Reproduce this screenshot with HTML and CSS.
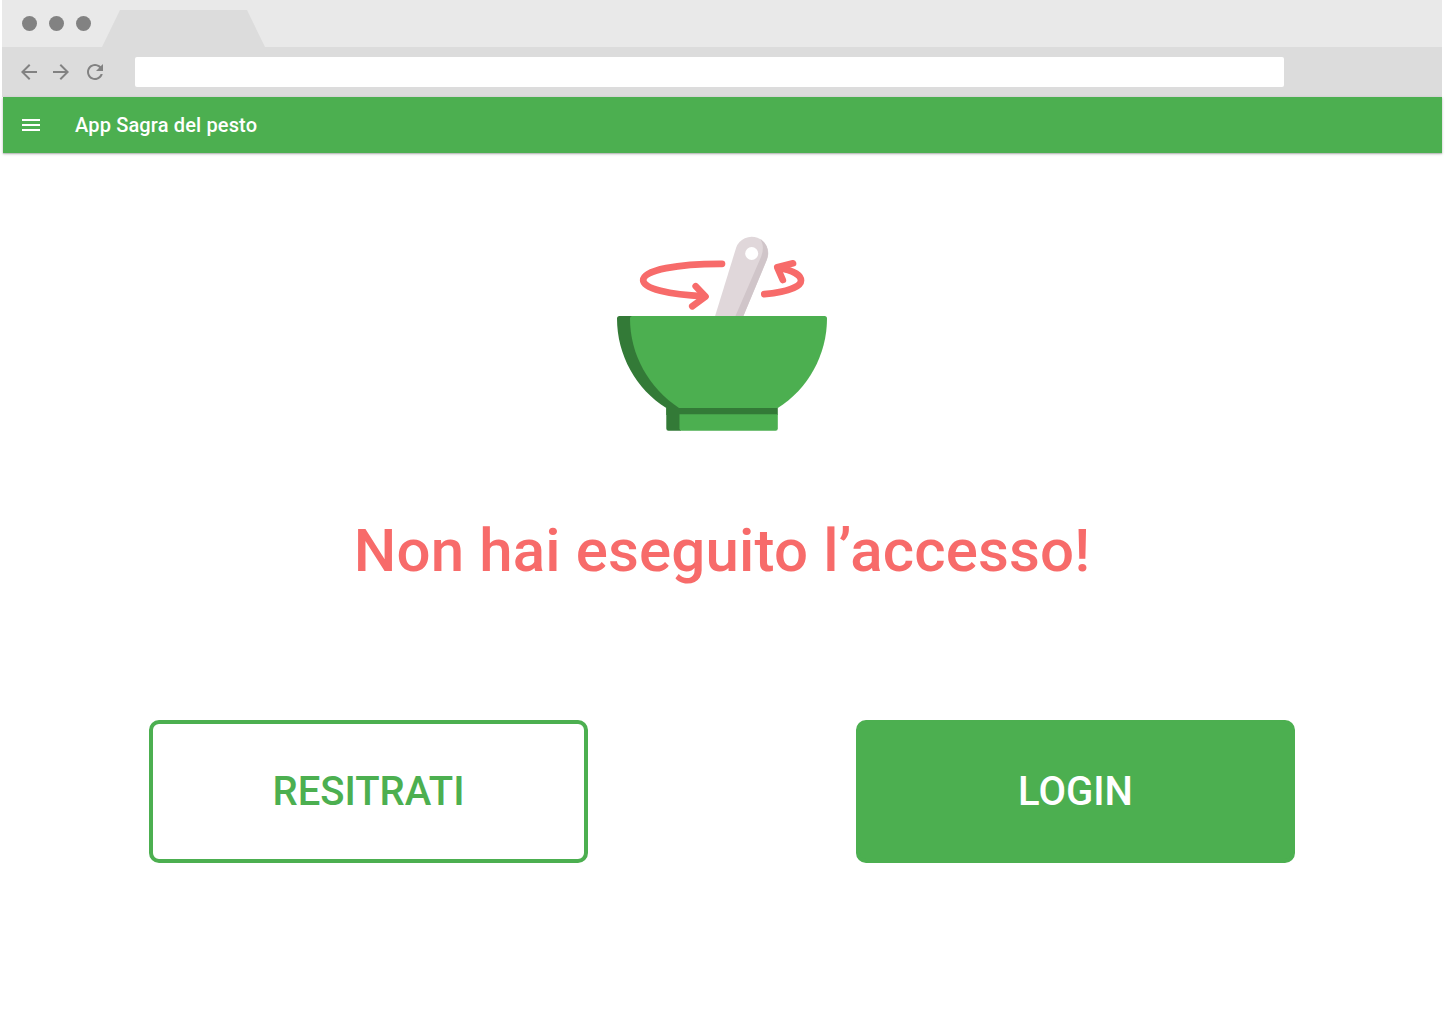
FILE: index.html
```html
<!DOCTYPE html>
<html lang="it">
<head>
<meta charset="utf-8">
<title>App Sagra del pesto</title>
<link rel="stylesheet" href="styles.css">
</head>
<body>
<div class="window">
  <div class="tab-strip">
    <span class="dot"></span><span class="dot"></span><span class="dot"></span>
    <div class="tab"></div>
  </div>
  <div class="toolbar">
    <svg class="nav-icon" viewBox="0 0 24 24"><path d="M20 11H7.830l5.590-5.590L12 4l-8 8 8 8 1.410-1.410L7.830 13H20v-2z"/></svg>
    <svg class="nav-icon forward" viewBox="0 0 24 24"><path d="M12 4l-1.410 1.410L16.170 11H4v2h12.170l-5.580 5.590L12 20l8-8z"/></svg>
    <svg class="nav-icon reload" viewBox="0 0 24 24"><path d="M17.650 6.350C16.200 4.900 14.210 4 12 4c-4.420 0-7.990 3.580-7.990 8s3.570 8 7.990 8c3.730 0 6.840-2.550 7.730-6h-2.080c-.82 2.330-3.040 4-5.650 4-3.310 0-6-2.690-6-6s2.690-6 6-6c1.660 0 3.140.69 4.220 1.780L13 11h7V4l-2.350 2.350z"/></svg>
    <div class="address"></div>
  </div>
  <header class="app-bar">
    <svg class="menu" viewBox="0 0 18 12"><path d="M0 0h18v2H0zM0 5h18v2H0zM0 10h18v2H0z"/></svg>
    <span class="app-title">App Sagra del pesto</span>
  </header>
  <main class="content">
    <svg class="mortar" viewBox="617 236 210 195">
      <path fill="#e0d7da" d="M714.800 317L736.200 247.500A16.300 16.300 0 0 1 767.200 259L743 317z"/>
      <path fill="#d0c5c9" d="M760.500 239.200C763.500 244.500 763.600 250.500 761 257L735 317H743L766.700 260C769.700 252 767.500 243.800 760.500 239.200z"/>
      <circle cx="751.700" cy="253.500" r="6.500" fill="#fff"/>
      <g class="arrows">
        <path d="M722 263.800C678 263.600 643.200 270 643.200 280.300C643.200 288.500 669 294.800 704 296.300"/>
        <path d="M695.700 286.200L705.500 296.600L692.300 306.300"/>
        <path d="M764.300 294.200C787 292 801 286.800 801 280.500C801 274.800 792.500 270.300 779 268"/>
        <path d="M793 263.300L777.300 267.300L782.800 280"/>
      </g>
      <path fill="#337a37" d="M619.500 316H640L681 408V430.700H668.500Q666.300 430.700 666.300 428.500V408C636 389 617 355 617 318.500Q617 316 619.500 316z"/>
      <path fill="#4caf50" d="M632.500 316H824.500Q827 316 827 318.500C827 355 808 389 777.800 408H679C649 388 630 355 630 318.500Q630 316 632.500 316z"/>
      <path fill="#337a37" d="M666.300 408H777.800V415H666.300z"/>
      <path fill="#4caf50" d="M679.500 414.300H777.800V428.500Q777.800 430.700 775.600 430.700H681.500Q679.500 430.700 679.500 428.500z"/>
    </svg>
    <h1 class="message">Non hai eseguito l’accesso!</h1>
    <div class="actions">
      <button class="button outlined">RESITRATI</button>
      <button class="button filled">LOGIN</button>
    </div>
  </main>
</div>
</body>
</html>
```
FILE: styles.css
```css
* { box-sizing: border-box; }

body {
  margin: 0;
  background: #fff;
  font-family: Roboto, sans-serif;
  font-weight: 500;
}

.window {
  width: 1440px;
  height: 1024px;
  margin-left: 2px;
}

.tab-strip {
  display: flex;
  height: 47px;
  padding-left: 20px;
  gap: 12px;
  background: #e9e9e9;
}

.dot {
  width: 15px;
  height: 15px;
  margin-top: 16px;
  border-radius: 50%;
  background: #828282;
}

.tab {
  width: 163px;
  height: 37px;
  margin: 10px 0 0 -1px;
  background: #dcdcdc;
  clip-path: polygon(18px 0, 145px 0, 100% 100%, 0 100%);
}

.toolbar {
  display: flex;
  align-items: center;
  height: 50px;
  padding-left: 15px;
  background: #dcdcdc;
}

.nav-icon {
  width: 24px;
  height: 24px;
  fill: #828282;
}

.forward { margin-left: 8px; }
.reload { margin-left: 10px; }

.address {
  width: 1149px;
  height: 30px;
  margin-left: 28px;
  border-radius: 2px;
  background: #fff;
}

.app-bar {
  display: flex;
  align-items: center;
  height: 56px;
  margin-left: 1px;
  padding-left: 19px;
  background: #4caf50;
  color: #fff;
  box-shadow: 0 1px 3px rgba(0, 0, 0, 0.2), 0 1px 1px rgba(0, 0, 0, 0.14);
}

.menu {
  width: 18px;
  height: 12px;
  fill: #fff;
}

.app-title {
  margin-left: 35px;
  font-size: 20px;
  line-height: 24px;
  letter-spacing: 0.15px;
}

.content {
  display: flex;
  flex-direction: column;
  align-items: center;
  padding-top: 83px;
}

.mortar {
  width: 210px;
  height: 195px;
}

.arrows {
  fill: none;
  stroke: #f76b6a;
  stroke-width: 6.700px;
  stroke-linecap: round;
  stroke-linejoin: round;
}

.message {
  margin: 85px 0 0;
  color: #f76b6a;
  font-size: 60px;
  font-weight: 500;
  line-height: 70px;
  letter-spacing: 0.15px;
  white-space: nowrap;
}

.actions {
  display: flex;
  gap: 268px;
  margin-top: 134px;
}

.button {
  width: 439px;
  height: 143px;
  padding: 0;
  border: 4px solid #4caf50;
  border-radius: 10px;
  font: 500 40px/48px Roboto, sans-serif;
}

.outlined {
  background: #fff;
  color: #4caf50;
}

.filled {
  background: #4caf50;
  color: #fff;
}
```
